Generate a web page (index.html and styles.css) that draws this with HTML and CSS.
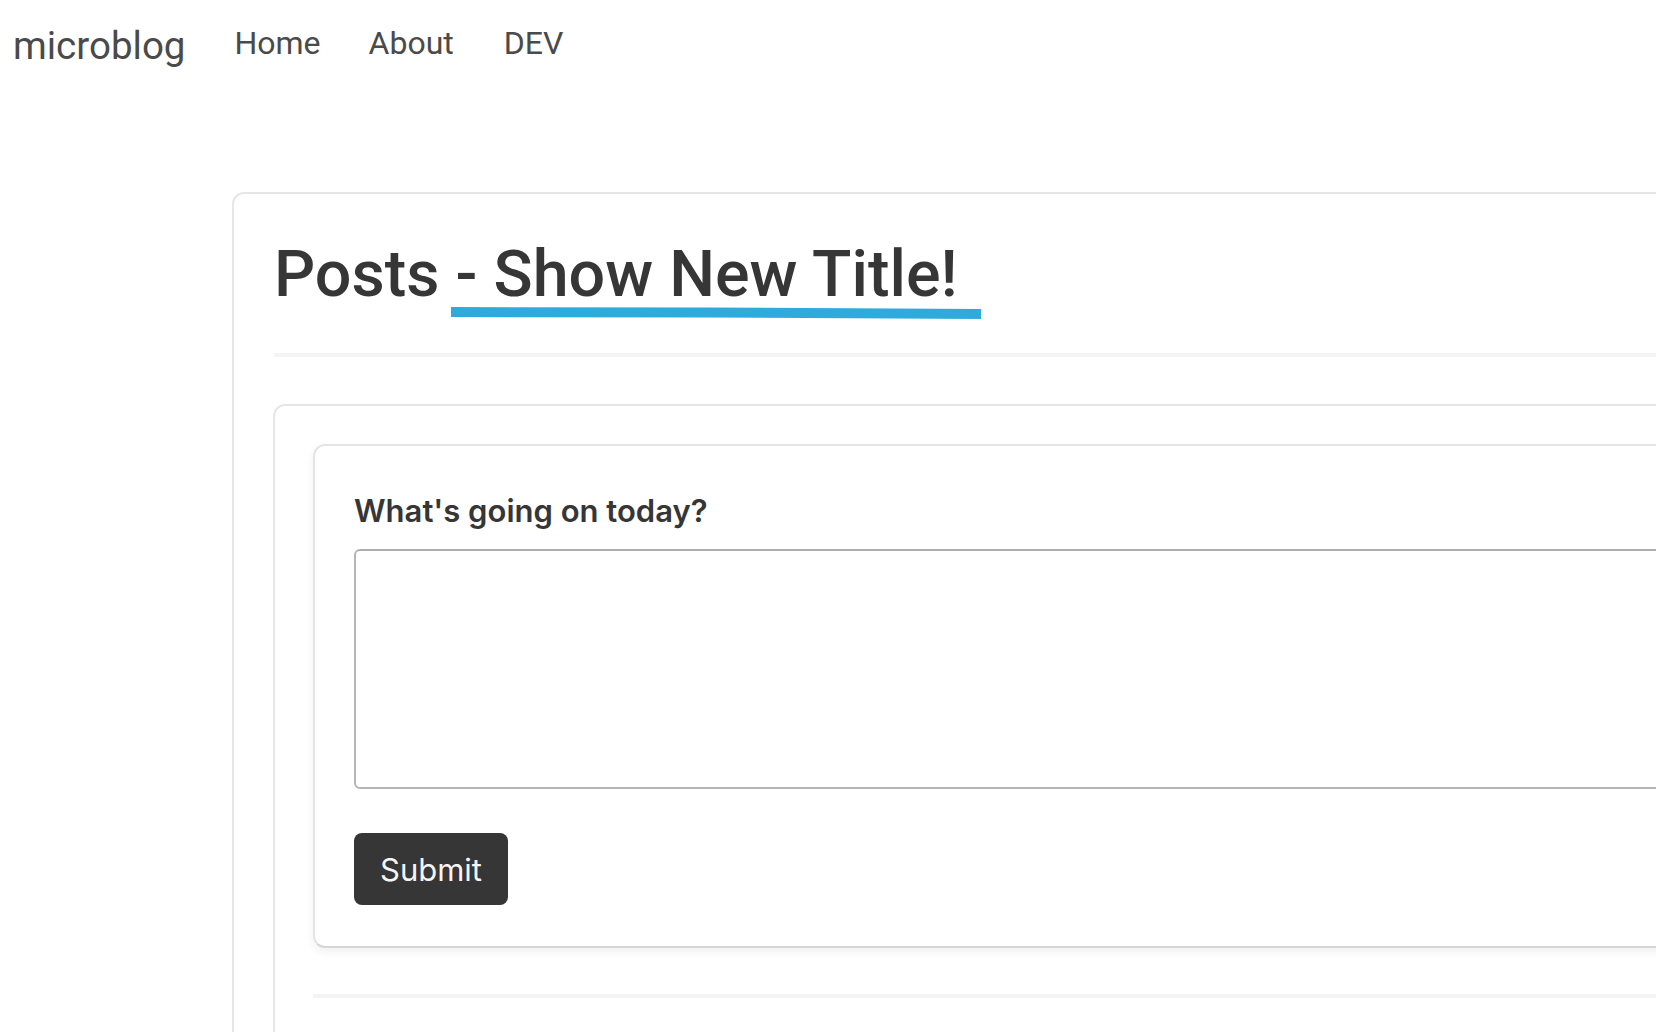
FILE: index.html
```html
<!DOCTYPE html>
<html lang="en">
<head>
<meta charset="utf-8">
<title>microblog</title>
<link rel="stylesheet" href="styles.css">
</head>
<body>
<nav class="navbar">
  <a class="brand" href="#">microblog</a>
  <div class="nav-links">
    <a class="nav-item" href="#">Home</a>
    <a class="nav-item" href="#">About</a>
    <a class="nav-item" href="#">DEV</a>
  </div>
</nav>
<main class="main">
  <section class="card">
    <h1 class="title">Posts <span class="highlight">- Show New Title!<svg class="underline" width="530" height="12" viewBox="0 0 530 12" preserveAspectRatio="none"><polygon points="0,0 260,0.6 530,2 530,12 260,10.6 0,10" fill="#2eaadc"/></svg></span></h1>
    <hr class="divider">
    <div class="panel">
      <form class="box">
        <label class="label">What's going on today?</label>
        <textarea class="textarea"></textarea>
        <button class="button" type="button">Submit</button>
      </form>
      <hr class="divider divider-inner">
    </div>
  </section>
</main>
</body>
</html>
```

FILE: styles.css
```css
html {
  overflow: hidden;
  background: #fff;
}

body {
  margin: 0;
  font-family: Roboto, "Liberation Sans", sans-serif;
  color: #363636;
}

.navbar {
  display: flex;
  align-items: flex-start;
  padding: 17px 0 0 13px;
}

.brand {
  font-family: Roboto, sans-serif;
  font-size: 38.5px;
  line-height: 57px;
  color: #4a4a4a;
  text-decoration: none;
  margin-right: 28px;
}

.nav-links {
  display: flex;
  padding-top: 2px;
}

.nav-item {
  font-family: Roboto, sans-serif;
  font-size: 32px;
  line-height: 48px;
  color: #4a4a4a;
  text-decoration: none;
  padding: 0 24px;
}

.nav-item:first-child {
  padding-left: 21px;
}

.nav-item:last-child {
  padding-left: 26px;
}

.main {
  margin-top: 118px;
  padding-left: 232px;
}

.card {
  width: 1700px;
  border: 2px solid #e6e6e6;
  border-radius: 12px;
  padding: 40px 40px 200px 40px;
}

.title {
  margin: 0;
  padding-top: 3px;
  font-family: Roboto, sans-serif;
  font-weight: 500;
  font-size: 64.6px;
  line-height: 74px;
  color: #363636;
}

.highlight {
  position: relative;
}

.underline {
  position: absolute;
  left: -5px;
  top: 71px;
  display: block;
}

.divider {
  border: none;
  height: 4px;
  background: #f4f4f4;
  margin: 42px 0 47px 0;
}

.panel {
  border: 2px solid #e6e6e6;
  border-radius: 12px;
  padding: 38px 38px 300px 38px;
  margin-left: -1px;
}

.box {
  display: flex;
  flex-direction: column;
  align-items: flex-start;
  border: 2px solid #e4e4e4;
  border-bottom-color: #d6d6d6;
  border-radius: 12px;
  padding: 42px 39px 41px 39px;
  box-shadow: 0 4px 10px rgba(10, 10, 10, 0.06);
}

.label {
  font-family: Inter, sans-serif;
  font-weight: 600;
  font-size: 31px;
  line-height: 45px;
  color: #363636;
  margin-bottom: 16px;
}

.textarea {
  display: block;
  box-sizing: border-box;
  width: 100%;
  height: 240px;
  border: 2px solid #b5b5b5;
  border-top-color: #adadad;
  border-radius: 6px;
  resize: none;
  margin: 0 0 44px 0;
  background: #fff;
}

.button {
  display: inline-flex;
  align-items: center;
  justify-content: center;
  height: 72px;
  padding: 0 26px;
  border: none;
  border-radius: 8px;
  background: #363636;
  color: #f5f5f5;
  font-family: Inter, sans-serif;
  font-size: 31px;
  font-weight: 400;
}

.divider-inner {
  margin: 46px 0 0 0;
}
```
